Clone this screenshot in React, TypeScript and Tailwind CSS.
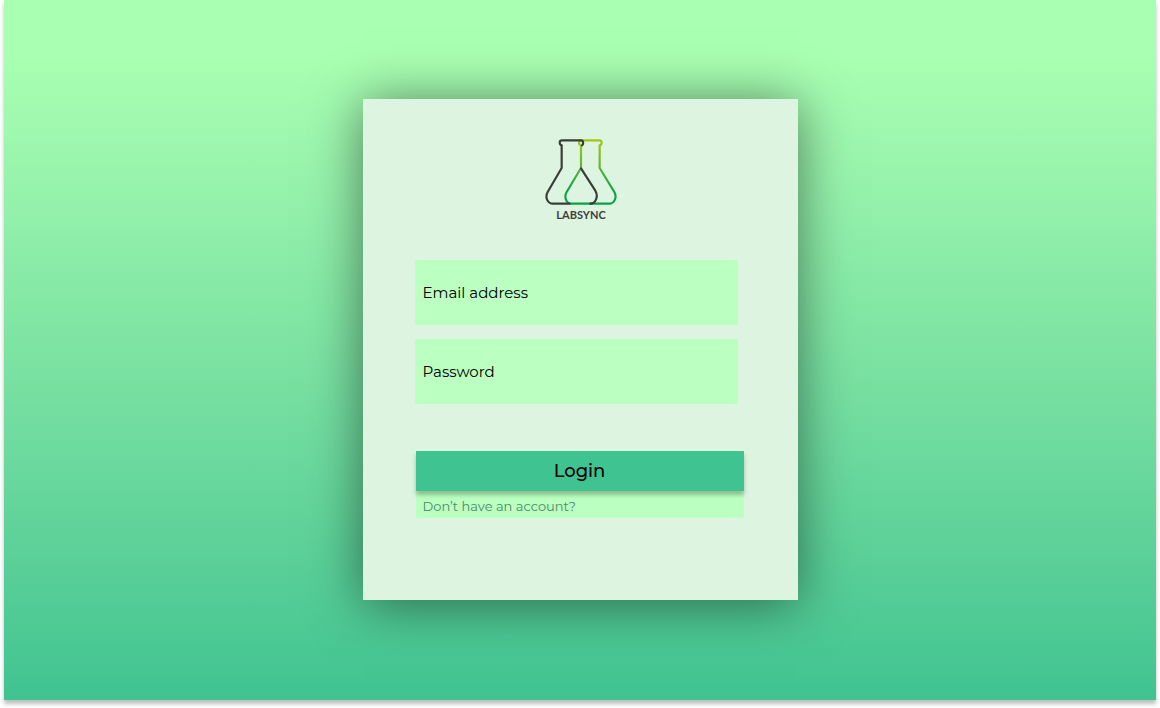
import React from "react";

function Logo() {
  return (
    <div className="flex flex-col items-center pl-1">
      <svg
        viewBox="30 24 216 204"
        className="h-[68px] w-[72px]"
        fill="none"
        strokeWidth="6.5"
        strokeLinecap="round"
        strokeLinejoin="round"
        aria-hidden="true"
      >
        <defs>
          <linearGradient id="flask" gradientUnits="userSpaceOnUse" x1="0" y1="30" x2="0" y2="220">
            <stop offset="0" stopColor="#a3c614" />
            <stop offset="0.35" stopColor="#6fb92b" />
            <stop offset="0.8" stopColor="#0fa24a" />
            <stop offset="1" stopColor="#0a9f4b" />
          </linearGradient>
        </defs>
        <path
          stroke="url(#flask)"
          d="M134 44 C131 40 131 31 140 31 H193 C202 31 202 44 194 46 V114 L238 186 C247 202 238 221 222 221 H110 C94 221 86 202 95 186 L138 114 V48"
        />
        <path
          stroke="#3b3b39"
          d="M138 115 L181 182 C191 200 182 221 166 221 M104 221 H54 C38 221 29 202 38 186 L80 114 V46 C72 44 72 31 81 31 H138 C146 31 146 42 141 46"
        />
      </svg>
      <span className="mt-[3px] font-['Lato',sans-serif] text-[11px] leading-3 font-bold text-[#3d3d3b]">
        LABSYNC
      </span>
    </div>
  );
}

const fieldClass =
  "block h-[65px] w-full bg-[#bbffc1] px-2 text-[15px] text-black placeholder:text-black placeholder:opacity-100 outline-none focus-visible:ring-2 focus-visible:ring-[#3fc391]";

export default function App() {
  return (
    <div className="min-h-screen bg-white px-1 pb-2 font-['Montserrat','Inter',sans-serif]">
      <main className="flex min-h-[calc(100vh-8px)] items-center justify-center bg-linear-to-b from-[#a9ffb2] from-8% to-[#3fc391] pb-[2px] shadow-[0_4px_4px_rgba(0,0,0,0.25)]">
        <section className="w-full max-w-[435px] bg-[#ddf4e0] pt-[39px] pr-[54px] pb-[82px] pl-[52px] shadow-[0_4px_50px_rgba(0,0,0,0.5)]">
          <Logo />
          <form className="mt-[39px]" onSubmit={(e) => e.preventDefault()}>
            <div className="flex flex-col gap-[14px] pr-[6px]">
              <input type="email" aria-label="Email address" placeholder="Email address" className={fieldClass} />
              <input type="password" aria-label="Password" placeholder="Password" className={fieldClass} />
            </div>
            <div className="mt-[47px] pl-px">
              <button
                type="submit"
                className="relative block h-10 w-full bg-[#3fc391] text-lg font-medium text-black shadow-[0_4px_4px_rgba(0,0,0,0.25)]"
              >
                Login
              </button>
              <a href="#signup" className="block bg-[#bbffc1] px-[7px] pt-[5px] pb-[2px] text-[13px] leading-5 text-[#4a8a6a]">
                Don’t have an account?
              </a>
            </div>
          </form>
        </section>
      </main>
    </div>
  );
}
